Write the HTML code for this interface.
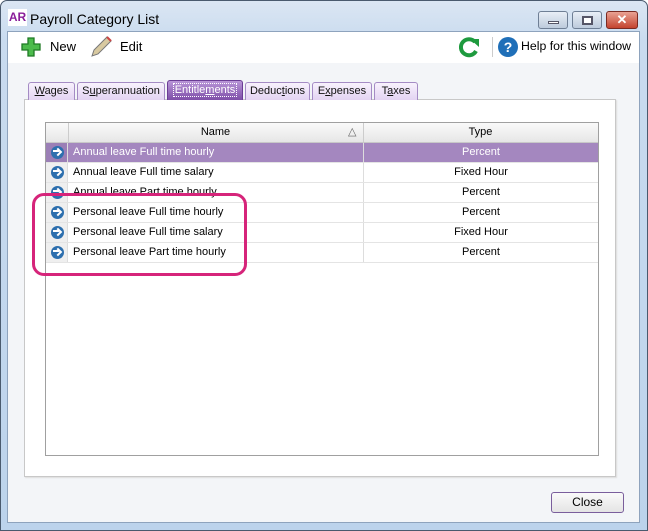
<!DOCTYPE html>
<html><head><style>
*{box-sizing:border-box;margin:0;padding:0}
body{width:648px;height:531px;overflow:hidden;background:#fff;font-family:"Liberation Sans",sans-serif;font-size:11px;color:#000;position:relative}
.frame{position:absolute;left:0;top:0;width:648px;height:531px;background:linear-gradient(#dbe6f3,#c9dbef 40px,#bcd3ec);border:1px solid #4a5a6e;border-radius:7px 7px 0 0}
.client{position:absolute;left:7px;top:31px;width:633px;height:492px;background:#f3f5f8;border:1px solid #8ea3bd}
.toolbar{position:absolute;left:0;top:0;width:631px;height:31px;background:#fff}
.abs{position:absolute}
.tab{position:absolute;top:82px;height:18px;border:1px solid #a48bc4;border-bottom:none;border-radius:3px 3px 0 0;background:linear-gradient(#f8f2fd,#e3d3f2);font-size:11px;text-align:center;line-height:17px;color:#111}
.panel{position:absolute;left:24px;top:99px;width:592px;height:378px;background:#fff;border:1px solid #c8c8c8;box-shadow:1px 1px 1px #ddd}
.grid{position:absolute;left:45px;top:122px;width:554px;height:334px;border:1px solid #a0a0a0;background:#fff}
.row{position:absolute;left:0;width:552px;height:20px;border-bottom:1px solid #e4e4e4;font-size:11px;line-height:19px}
.row .ic{position:absolute;left:0;top:0;width:22px;height:19px;background:#efefef;border-right:1px solid #ddd}
.row .n{position:absolute;left:27px}
.row .t{position:absolute;left:317px;width:235px;text-align:center;border-left:1px solid #ddd;height:19px}
.arrow{position:absolute;left:5px;top:3px;width:13px;height:13px;border-radius:50%;background:#2d6fae}
.arrow:after{content:"";position:absolute;left:2px;top:4px;width:6px;height:2px;background:#fff}
.arrow:before{content:"";position:absolute;left:4px;top:3px;width:4px;height:4px;border-top:2px solid #fff;border-right:2px solid #fff;transform:rotate(45deg)}
.sel{background:#a487bf;color:#fff}
.sel .ic{background:#9b7fb6}
</style></head><body>
<div class="frame"></div>
<div class="abs" style="left:8px;top:9px;width:19px;height:17px;background:#fff;color:#8a1e9a;font-weight:bold;font-size:12px;line-height:17px;text-align:center">AR</div>
<div class="abs" style="left:30px;top:11px;font-size:14px">Payroll Category List</div>
<div class="abs" style="left:538px;top:11px;width:30px;height:18px;border:1px solid #6f7f95;border-radius:3px;background:linear-gradient(#e8eef6,#bdcbdc)"><div class="abs" style="left:9px;top:9px;width:11px;height:3px;background:#fff;border:1px solid #556"></div></div>
<div class="abs" style="left:572px;top:11px;width:30px;height:18px;border:1px solid #6f7f95;border-radius:3px;background:linear-gradient(#e8eef6,#bdcbdc)"><div class="abs" style="left:9px;top:4px;width:11px;height:9px;border:2px solid #556;background:#fff"></div></div>
<div class="abs" style="left:606px;top:11px;width:32px;height:18px;border:1px solid #7a2a22;border-radius:3px;background:linear-gradient(#e9a293,#c4432f);color:#fff;font-weight:bold;text-align:center;line-height:16px;font-size:13px">✕</div>
<div class="client">
<div class="toolbar"></div>
</div>
<svg class="abs" style="left:20px;top:36px" width="22" height="22"><path d="M8 2h6v6h6v6h-6v6h-6v-6h-6v-6h6z" fill="#4cbb4c" stroke="#1e7a24" stroke-width="1.3"/></svg>
<div class="abs" style="left:50px;top:39px;font-size:13px">New</div>
<svg class="abs" style="left:89px;top:35px" width="24" height="24"><path d="M3 21l2-6 13-13 4 4-13 13z" fill="#d8c9a0" stroke="#777" stroke-width="1"/><path d="M18 2l4 4" stroke="#c44" stroke-width="2"/></svg>
<div class="abs" style="left:120px;top:39px;font-size:13px">Edit</div>
<svg class="abs" style="left:458px;top:36px" width="22" height="22"><path d="M17 6a8 8 0 1 0 1 9" fill="none" stroke="#1e9a3e" stroke-width="4"/><path d="M12 3h9v8z" fill="#1e9a3e"/></svg>
<div class="abs" style="left:492px;top:37px;width:1px;height:20px;background:#ccc"></div>
<div class="abs" style="left:498px;top:37px;width:20px;height:20px;border-radius:50%;background:#1f6fb8;color:#fff;font-weight:bold;text-align:center;line-height:20px;font-size:14px">?</div>
<div class="abs" style="left:521px;top:39px;font-size:12.3px">Help for this window</div>
<div class="panel"></div>
<div class="tab" style="left:28px;width:47px"><u>W</u>ages</div>
<div class="tab" style="left:77px;width:88px">S<u>u</u>perannuation</div>
<div class="tab" style="left:167px;width:76px;top:80px;height:20px;line-height:19px;background:linear-gradient(#b996d8,#7e4ea8);color:#fff;border-color:#6b3d95"><span style="border:1px dotted #fff;padding:0 1px">Entitle<u>m</u>ents</span></div>
<div class="tab" style="left:245px;width:65px">Deduc<u>t</u>ions</div>
<div class="tab" style="left:312px;width:60px">E<u>x</u>penses</div>
<div class="tab" style="left:374px;width:44px">T<u>a</u>xes</div>
<div class="grid">
<div class="abs" style="left:0;top:0;width:552px;height:20px;background:linear-gradient(#fafafa,#e6e6e6);border-bottom:1px solid #c8c8c8;line-height:19px">
<div class="abs" style="left:22px;top:0;width:1px;height:19px;background:#ccc"></div>
<div class="abs" style="left:22px;width:295px;text-align:center">Name</div>
<div class="abs" style="left:302px;color:#666;font-size:11px">△</div>
<div class="abs" style="left:317px;top:0;width:1px;height:19px;background:#ccc"></div>
<div class="abs" style="left:317px;width:235px;text-align:center">Type</div>
</div>
<div class="row sel" style="top:20px"><div class="ic"><div class="arrow"></div></div><span class="n">Annual leave Full time hourly</span><span class="t">Percent</span></div>
<div class="row" style="top:40px"><div class="ic"><div class="arrow"></div></div><span class="n">Annual leave Full time salary</span><span class="t">Fixed Hour</span></div>
<div class="row" style="top:60px"><div class="ic"><div class="arrow"></div></div><span class="n">Annual leave Part time hourly</span><span class="t">Percent</span></div>
<div class="row" style="top:80px"><div class="ic"><div class="arrow"></div></div><span class="n">Personal leave Full time hourly</span><span class="t">Percent</span></div>
<div class="row" style="top:100px"><div class="ic"><div class="arrow"></div></div><span class="n">Personal leave Full time salary</span><span class="t">Fixed Hour</span></div>
<div class="row" style="top:120px"><div class="ic"><div class="arrow"></div></div><span class="n">Personal leave Part time hourly</span><span class="t">Percent</span></div>
</div>
<div class="abs" style="left:32px;top:193px;width:215px;height:83px;border:3px solid #d6247a;border-radius:12px"></div>
<div class="abs" style="left:551px;top:492px;width:73px;height:21px;border:1px solid #7a5e9c;border-radius:3px;background:linear-gradient(#fafafa,#e4e4e4);text-align:center;line-height:19px;font-size:12px">Close</div>
</body></html>
